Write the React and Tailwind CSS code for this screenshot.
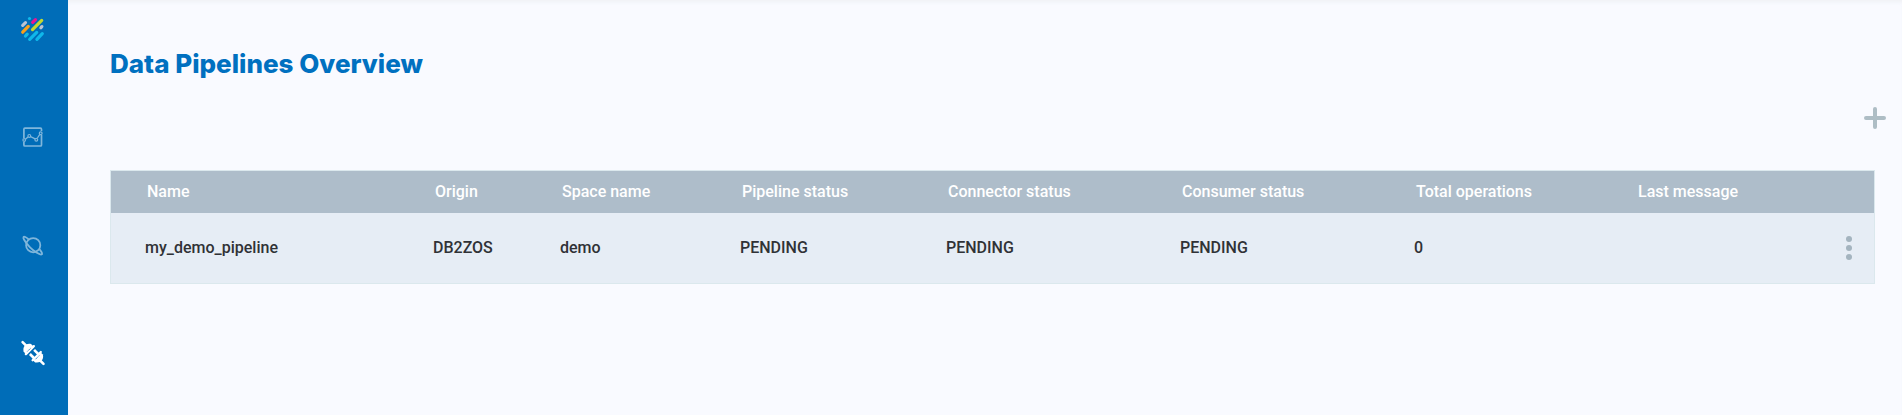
import React from "react";

const columns = [
  "Name",
  "Origin",
  "Space name",
  "Pipeline status",
  "Connector status",
  "Consumer status",
  "Total operations",
  "Last message",
];

const rows = [["my_demo_pipeline", "DB2ZOS", "demo", "PENDING", "PENDING", "PENDING", "0", ""]];

const grid =
  "grid grid-cols-[288px_127px_180px_206px_234px_234px_222px_1fr] items-center text-base font-medium leading-6";

function Logo() {
  return (
    <svg className="size-7" viewBox="0 0 28 28" fill="none" strokeWidth="3.2" strokeLinecap="round">
      <path d="M11.500 4.500h.01" stroke="#0fb8ea" />
      <path d="M14.700 8.400l2.800-2.800" stroke="#ec1390" />
      <path d="M14.500 15.600l9.200-9.200" stroke="#c4d92e" />
      <path d="M4.700 11.300l2.800-2.600" stroke="#b9c3d3" />
      <path d="M4.700 18.200l5.600-5.800" stroke="#f9a01b" />
      <path d="M22.900 13.800l1-1.200" stroke="#b9c3d3" />
      <path d="M7.500 22l1.700-1.900" stroke="#0fb8ea" />
      <path d="M11.700 25.400l7-7M18.900 25.400l5.400-5.800" stroke="#0fb8ea" />
    </svg>
  );
}

function ChartIcon() {
  return (
    <svg className="size-6" viewBox="0 0 24 24" fill="none" stroke="#7fb6db" strokeWidth="1.7">
      <path d="M3.900 13V4.200a1 1 0 0 1 1-1h15.600a1 1 0 0 1 1 1V6M21.500 10v10a1 1 0 0 1-1 1H4.900a1 1 0 0 1-1-1v-3" />
      <path d="M5.400 14.200l2.600-2.300M10.600 11.600l4.600 2.300M17.400 13l2.400-3.600" strokeWidth="1.300" />
      <g strokeWidth="1.200">
        <circle cx="4.200" cy="15" r="1.300" />
        <circle cx="9.300" cy="10.900" r="1.400" />
        <circle cx="16.300" cy="14.800" r="1.400" />
        <circle cx="20.700" cy="8.200" r="1.400" />
      </g>
    </svg>
  );
}

function PlanetIcon() {
  return (
    <svg className="size-6" viewBox="0 0 24 24" fill="none" stroke="#7fb6db" strokeWidth="1.800">
      <circle cx="13.200" cy="12.200" r="7.100" />
      <path d="M8.500 6.200C6 4.100 4.100 3.300 3.600 3.900C2.700 5 5.600 9.800 9.800 14.100S19.500 22 21.500 21.500C22.900 21.100 21.500 18.500 19 15.600" />
    </svg>
  );
}

function PlugIcon() {
  return (
    <svg className="size-7" viewBox="0 0 28 28" fill="none" stroke="#fff">
      <path d="M4.600 4.200l3 3M25.500 25.800l-3-3" strokeWidth="2.600" strokeLinecap="round" />
      <path d="M5.600 13.800C4.400 8.500 7.800 4.800 13.100 6L15.400 8.400L8 16Z" fill="#fff" stroke="none" />
      <path d="M7.900 16.100L15.800 8.200" strokeWidth="2.400" strokeLinecap="round" />
      <path d="M24.900 16.600C26.100 21.700 22.400 25.600 17.100 24.400L14.600 22L22.400 14.200Z" fill="#fff" stroke="none" />
      <path d="M14.600 22.200L22.800 14" strokeWidth="2.300" strokeLinecap="round" />
      <path d="M11.900 16l4.500 4.500M16.100 11.900l4.500 4.500" strokeWidth="2.600" />
      <path d="M9.400 13.400l3.600-3.600M17.600 21.200l3.600-3.600" stroke="#006db8" strokeWidth="1" strokeDasharray="1.300 1" />
    </svg>
  );
}

export default function App() {
  return (
    <div className="flex h-[415px] w-full overflow-hidden bg-[#f9faff] font-['Roboto',sans-serif]">
      <nav className="flex w-[68px] shrink-0 flex-col items-center bg-[#006db8] pr-1">
        <a className="flex h-[83px] items-start pt-[14px]"><Logo /></a>
        <a className="flex h-[108px] items-center"><ChartIcon /></a>
        <a className="flex h-[107px] items-center"><PlanetIcon /></a>
        <a className="flex h-[108px] items-center"><PlugIcon /></a>
      </nav>
      <main className="flex grow flex-col pl-[42px] shadow-[inset_0_4px_4px_-2px_#eff1f5]">
        <h1 className="mt-[44px] h-10 w-fit whitespace-nowrap font-['Inter',sans-serif] text-[26px] font-extrabold leading-10 tracking-[0.01px] text-[#0070c0]">
          Data Pipelines Overview
        </h1>
        <div className="mt-[23px] flex h-[22px] justify-end pr-4">
          <svg className="size-[22px]" viewBox="0 0 22 22" stroke="#aebdc5" strokeWidth="4" strokeLinecap="round">
            <path d="M2 11h18M11 2v18" />
          </svg>
        </div>
        <section className="mt-[41px] mr-[27px] border border-[#dbe8ed] bg-[#e6edf5]">
          <div className={`${grid} h-[42px] bg-[#aebdca] pl-9 text-white`}>
            {columns.map((c) => <span key={c}>{c}</span>)}
          </div>
          {rows.map((row) => (
            <div key={row[0]} className="flex h-[70px]">
              <div className={`${grid} grow pl-[34px] text-[#303236]`}>
                {row.map((value, i) => <span key={columns[i]}>{value}</span>)}
              </div>
              <button className="-ml-9 flex w-9 flex-col items-start justify-center gap-[3px] pl-2">
                <i className="size-1.5 rounded-full bg-[#a4b4bf]" />
                <i className="size-1.5 rounded-full bg-[#a4b4bf]" />
                <i className="size-1.5 rounded-full bg-[#a4b4bf]" />
              </button>
            </div>
          ))}
        </section>
      </main>
    </div>
  );
}
